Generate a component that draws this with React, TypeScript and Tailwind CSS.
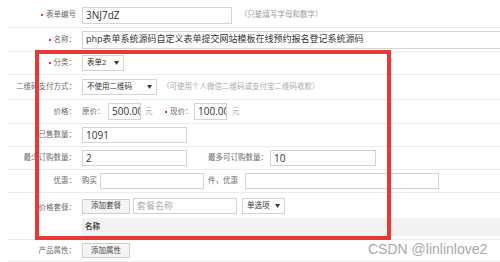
import React from "react";

const Req = () => (
  <span className="mr-[3px] inline-block h-[2px] w-[2px] bg-[#e53935] align-middle" />
);

const Label = ({ text, req }: { text: string; req?: boolean }) => (
  <div className="w-[68px] shrink-0 text-right text-[7.5px] text-[#6a6a6a]">
    {req && <Req />}
    {text}
  </div>
);

const Box = ({
  value,
  w,
  muted,
  size = "text-[10px]",
}: {
  value: string;
  w: string;
  muted?: boolean;
  size?: string;
}) => (
  <div
    className={`${w} ${size} h-[16px] shrink-0 overflow-hidden whitespace-nowrap border border-[#d4d4d4] bg-white pl-[3px] leading-[14px] ${
      muted ? "text-[#b0b0b0]" : "text-[#333]"
    }`}
  >
    {value}
  </div>
);

const Select = ({ value, w }: { value: string; w: string }) => (
  <div
    className={`${w} flex h-[16px] shrink-0 items-center justify-between border border-[#d4d4d4] bg-white px-[4px] text-[7.5px] text-[#333]`}
  >
    <span>{value}</span>
    <span className="text-[5px]">▼</span>
  </div>
);

const Btn = ({ text }: { text: string }) => (
  <div className="flex h-[15px] w-[48px] shrink-0 items-center justify-center border border-[#cfcfcf] bg-[#f4f4f4] text-[7.5px] text-[#444]">
    {text}
  </div>
);

const Row = ({
  h,
  children,
}: {
  h: string;
  children: React.ReactNode;
}) => (
  <div className={`${h} flex items-center border-b border-[#ececec]`}>
    {children}
  </div>
);

export default function App() {
  return (
    <div className="relative h-[262px] w-[500px] overflow-hidden bg-white font-['Open_Sans','Noto_Sans_CJK_SC',sans-serif]">
      <div className="ml-[8px] flex flex-col">
        <Row h="h-[28px] pt-[3px]">
          <Label text="表单编号" req />
          <div className="ml-[6px] flex items-center gap-[8px]">
            <Box value="3NJ7dZ" w="w-[150px] h-[17px]" />
            <span className="text-[7.5px] text-[#999]">（只能填写字母和数字）</span>
          </div>
        </Row>
        <Row h="h-[24px]">
          <Label text="名称：" req />
          <div className="ml-[6px]">
            <Box
              value="php表单系统源码自定义表单提交网站模板在线预约报名登记系统源码"
              w="w-[440px] h-[18px]"
              size="text-[9px]"
            />
          </div>
        </Row>
        <Row h="h-[23px]">
          <Label text="分类：" req />
          <div className="ml-[6px]">
            <Select value="表单2" w="w-[42px]" />
          </div>
        </Row>
        <Row h="h-[25px]">
          <Label text="二维码支付方式：" />
          <div className="ml-[6px] flex items-center gap-[5px]">
            <Select value="不使用二维码" w="w-[75px]" />
            <span className="text-[7.5px] text-[#aaa]">
              （可使用个人微信二维码或支付宝二维码收款）
            </span>
          </div>
        </Row>
        <Row h="h-[24px]">
          <Label text="价格：" />
          <div className="ml-[6px] flex items-center text-[7.5px] text-[#6a6a6a]">
            <span className="w-[26px]">原价：</span>
            <Box value="500.00" w="w-[33px] h-[17px]" />
            <span className="ml-[4px] w-[20px] text-[#aaa]">元</span>
            <span className="w-[29px]">
              <Req />
              现价：
            </span>
            <Box value="100.00" w="w-[33px] h-[17px]" />
            <span className="ml-[5px] text-[#aaa]">元</span>
          </div>
        </Row>
        <Row h="h-[23px]">
          <Label text="已售数量：" />
          <div className="ml-[6px]">
            <Box value="1091" w="w-[105px]" />
          </div>
        </Row>
        <Row h="h-[23px]">
          <Label text="最少订购数量：" />
          <div className="ml-[6px] flex items-center">
            <Box value="2" w="w-[105px]" />
            <span className="ml-[21px] w-[62px] text-[7.5px] text-[#6a6a6a]">
              最多可订购数量：
            </span>
            <Box value="10" w="w-[106px]" />
          </div>
        </Row>
        <Row h="h-[23px]">
          <Label text="优惠：" />
          <div className="ml-[6px] flex items-center text-[7.5px] text-[#6a6a6a]">
            <span className="w-[18px]">购买</span>
            <Box value="" w="w-[104px]" />
            <span className="ml-[4px] w-[37px]">件，优惠</span>
            <Box value="" w="w-[194px]" />
          </div>
        </Row>
        <div className="flex h-[47px] items-start border-b border-[#ececec] pt-[5px]">
          <div className="mt-[4px]">
            <Label text="价格套餐：" />
          </div>
          <div className="ml-[6px] flex flex-1 flex-col">
            <div className="flex items-center">
              <Btn text="添加套餐" />
              <div className="ml-[3px]">
                <Box value="套餐名称" w="w-[104px]" size="text-[9px]" muted />
              </div>
              <div className="ml-[5px]">
                <Select value="单选项" w="w-[43px]" />
              </div>
            </div>
            <div className="mt-[4px] flex h-[18px] items-center bg-[#f2f2f2] pl-[3px] text-[7.5px] font-semibold text-[#444]">
              名称
            </div>
          </div>
        </div>
        <Row h="h-[22px]">
          <Label text="产品属性：" />
          <div className="ml-[6px]">
            <Btn text="添加属性" />
          </div>
        </Row>
      </div>

      <div className="pointer-events-none absolute left-[35px] top-[50px] h-[190px] w-[356px] border-[4px] border-[#e53935]" />

      <div className="absolute left-[368px] top-[239px] font-['Liberation_Sans',sans-serif] text-[14px] text-[#a9a9a9]">
        CSDN @linlinlove2
      </div>
    </div>
  );
}
